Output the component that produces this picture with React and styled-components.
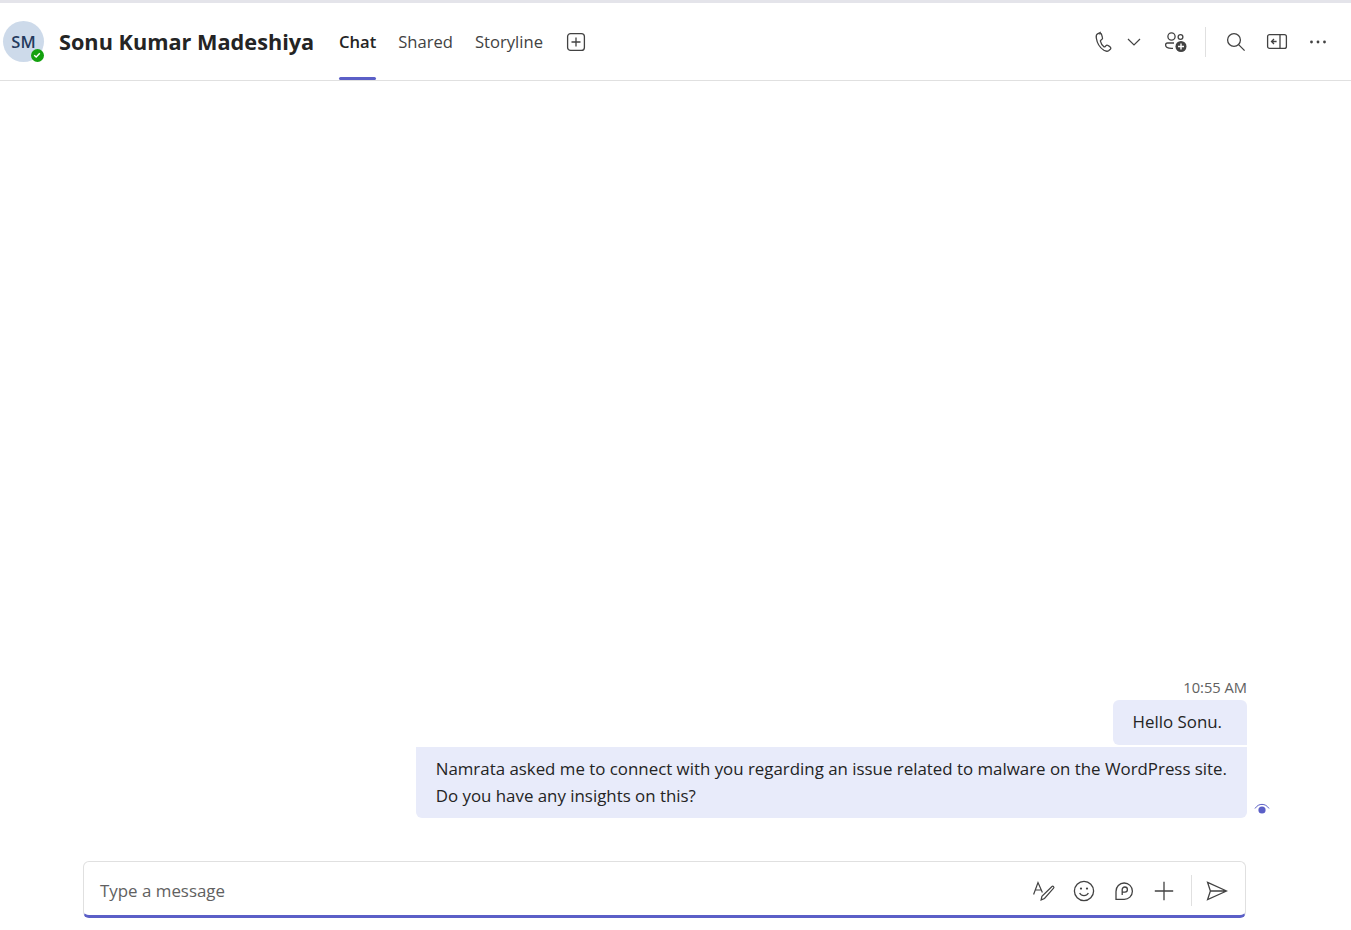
import React from "react";
import styled, { createGlobalStyle } from "styled-components";

const GlobalStyle = createGlobalStyle`
  html, body {
    margin: 0;
    padding: 0;
    background: #ffffff;
  }
  body {
    font-family: "Open Sans", "Noto Sans", "Liberation Sans", sans-serif;
    color: #242424;
  }
`;

const Page = styled.div`
  width: 1351px;
  height: 930px;
  display: flex;
  flex-direction: column;
  overflow: hidden;
  border-top: 3px solid #e4e4ea;
  box-sizing: border-box;
`;

const Header = styled.header`
  height: 77px;
  flex: none;
  display: flex;
  align-items: center;
  border-bottom: 1px solid #e0e0e0;
  box-sizing: content-box;
  padding-left: 3px;
  padding-right: 21px;
`;

const Avatar = styled.div`
  position: relative;
  width: 41px;
  height: 41px;
  flex: none;
  border-radius: 50%;
  background: #cddaea;
  color: #243a5e;
  font-size: 16.5px;
  font-weight: 600;
  display: flex;
  align-items: center;
  justify-content: center;
`;

const Presence = styled.span`
  position: absolute;
  right: 0;
  bottom: 0;
  width: 13.5px;
  height: 13.5px;
  border-radius: 50%;
  background: #13a10e;
  display: flex;
  align-items: center;
  justify-content: center;
`;

const Name = styled.h1`
  margin: 0 0 0 15px;
  flex: none;
  width: 280px;
  font-size: 21.7px;
  font-weight: 700;
  color: #242424;
  white-space: nowrap;
`;

const Tabs = styled.nav`
  display: flex;
  align-items: stretch;
  align-self: stretch;
  gap: 22px;
`;

const Tab = styled.a`
  position: relative;
  display: flex;
  align-items: center;
  font-size: 16.6px;
  font-weight: ${(p) => (p.$active ? 600 : 400)};
  color: ${(p) => (p.$active ? "#242424" : "#424242")};
  &::after {
    content: "";
    display: ${(p) => (p.$active ? "block" : "none")};
    position: absolute;
    left: 0;
    right: 0;
    bottom: 0;
    height: 3px;
    border-radius: 2px;
    background: #5b5fc7;
  }
`;

const AddTab = styled.button`
  border: 0;
  background: none;
  padding: 0;
  margin: 1px 0 0 23px;
  display: flex;
  color: #424242;
`;

const Spacer = styled.div`
  flex: 1;
`;

const Actions = styled.div`
  display: flex;
  align-items: center;
`;

const IconButton = styled.button`
  width: ${(p) => p.$w || 24}px;
  height: 24px;
  border: 0;
  background: none;
  padding: 0;
  margin-left: ${(p) => p.$ml || 0}px;
  display: flex;
  align-items: center;
  justify-content: center;
  color: #424242;
`;

const Divider = styled.div`
  width: 1px;
  height: ${(p) => p.$h}px;
  margin: 0 ${(p) => p.$mr}px 0 ${(p) => p.$ml}px;
  background: #e0e0e0;
`;

const Thread = styled.main`
  flex: 1;
  display: flex;
  flex-direction: column;
  align-items: flex-end;
  justify-content: flex-end;
  padding-right: 104px;
`;

const Time = styled.div`
  font-size: 14.7px;
  line-height: 19px;
  color: #616161;
  margin-bottom: 3px;
`;

const Bubble = styled.div`
  position: relative;
  background: #e8ebfa;
  color: #242424;
  font-size: 16.88px;
  line-height: ${(p) => (p.$last ? 27 : 24)}px;
  padding: ${(p) => (p.$last ? "8px 20px 9px" : "10px 25px 11px 20px")};
  margin-bottom: ${(p) => (p.$last ? 0 : 2)}px;
  border-radius: ${(p) => (p.$last ? "0 0 6px 6px" : "6px 6px 0 6px")};
  white-space: nowrap;
`;

const Seen = styled.span`
  position: absolute;
  left: calc(100% + 7px);
  bottom: 3px;
  display: flex;
`;

const ComposerWrap = styled.div`
  flex: none;
  padding: 43px 105px 12px 83px;
`;

const Composer = styled.div`
  height: 57px;
  box-sizing: border-box;
  border: 1px solid #e0e0e0;
  border-bottom: 3px solid #5b5fc7;
  border-radius: 6px;
  display: flex;
  align-items: center;
  padding: 4px 16px 0 16px;
`;

const Placeholder = styled.span`
  flex: 1;
  font-size: 16.9px;
  color: #616161;
`;

const Tools = styled.div`
  display: flex;
  align-items: center;
  gap: 16px;
`;

export default function App() {
  return (
    <Page>
      <GlobalStyle />
      <Header>
        <Avatar>
          SM
          <Presence>
            <svg width="8" height="8" viewBox="0 0 8 8" fill="none">
              <path d="M1.2 4.2 3.2 6 6.8 2.2" stroke="#fff" strokeWidth="1.4" />
            </svg>
          </Presence>
        </Avatar>
        <Name>Sonu Kumar Madeshiya</Name>
        <Tabs>
          <Tab $active>Chat</Tab>
          <Tab>Shared</Tab>
          <Tab>Storyline</Tab>
        </Tabs>
        <AddTab>
          <svg width="20" height="20" viewBox="0 0 20 20" fill="none" stroke="currentColor" strokeWidth="1.3">
            <rect x="1.6" y="1.6" width="16.8" height="16.8" rx="3" />
            <path d="M10 5.5v9M5.5 10h9" />
          </svg>
        </AddTab>
        <Spacer />
        <Actions>
          <IconButton>
            <svg width="20" height="22" viewBox="0 0 20 22" fill="none" stroke="currentColor" strokeWidth="1.3">
              <path d="M6.2 1.6 3.6 2.8C2.4 3.5 2 5 2.3 7c.7 4.6 3.4 9.6 7.6 12.3 1.7 1 3.7 1.2 5 .2l1.4-1.2c.8-.8.6-1.8-.2-2.4l-2-1.4c-.8-.5-1.7-.4-2.3.3l-.8.9c-.3.3-.7.3-1.1.1-1.7-1.3-2.9-3.2-3.5-5.6-.1-.4 0-.7.4-1l1-.7c.7-.5.9-1.3.6-2.1l-.8-2.8c-.3-.9-1-1.4-1.4-1z" />
            </svg>
          </IconButton>
          <IconButton $w={16} $ml={10}>
            <svg width="14" height="8" viewBox="0 0 14 8" fill="none" stroke="currentColor" strokeWidth="1.2">
              <path d="M1 1l6 6 6-6" />
            </svg>
          </IconButton>
          <IconButton $ml={22}>
            <svg width="24" height="22" viewBox="0 0 24 22" fill="none" stroke="currentColor" strokeWidth="1.3">
              <circle cx="7.5" cy="5.5" r="3.6" />
              <circle cx="16.5" cy="6" r="2.4" />
              <path d="M10 12H3.6C2.4 12 1.6 12.8 1.6 14c0 2 2 3.4 6 3.4h1.4" />
              <circle cx="17" cy="15.5" r="5.5" fill="#424242" stroke="none" />
              <path d="M17 12.5v6M14 15.5h6" stroke="#fff" strokeWidth="1.4" />
            </svg>
          </IconButton>
          <Divider $h={30} $ml={17} $mr={18} />
          <IconButton>
            <svg width="20" height="20" viewBox="0 0 20 20" fill="none" stroke="currentColor" strokeWidth="1.3">
              <circle cx="8" cy="8" r="6.4" />
              <path d="M12.6 12.6 18.6 18.6" />
            </svg>
          </IconButton>
          <IconButton $ml={17}>
            <svg width="22" height="17" viewBox="0 0 22 17" fill="none" stroke="currentColor" strokeWidth="1.3">
              <rect x="1.6" y="1.6" width="18.8" height="13.8" rx="2" />
              <path d="M14 1.6v13.8M10.6 8.5H5.6M8 6 5.5 8.5 8 11" />
            </svg>
          </IconButton>
          <IconButton $ml={17}>
            <svg width="18" height="4" viewBox="0 0 18 4" fill="currentColor">
              <circle cx="2.5" cy="2" r="1.4" />
              <circle cx="9" cy="2" r="1.4" />
              <circle cx="15.5" cy="2" r="1.4" />
            </svg>
          </IconButton>
        </Actions>
      </Header>
      <Thread>
        <Time>10:55 AM</Time>
        <Bubble>Hello Sonu.</Bubble>
        <Bubble $last>
          Namrata asked me to connect with you regarding an issue related to malware on the WordPress site.
          <br />
          Do you have any insights on this?
          <Seen>
            <svg width="16" height="12" viewBox="0 0 16 12" fill="none">
              <path d="M1 5.5C3 2.5 5.4 1.4 8 1.4s5 1.1 7 4.1" stroke="#5b5fc7" strokeWidth="1" />
              <circle cx="8" cy="7" r="3.6" fill="#5b5fc7" />
            </svg>
          </Seen>
        </Bubble>
      </Thread>
      <ComposerWrap>
        <Composer>
          <Placeholder>Type a message</Placeholder>
          <Tools>
            <IconButton>
              <svg width="24" height="24" viewBox="0 0 24 24" fill="none" stroke="currentColor" strokeWidth="1.2">
                <path d="M1.6 15.5 6 3.5l4.4 10M3.4 11H8.8" />
                <path d="M20 7.5c1-1 2.6.6 1.6 1.6L12.5 19.5l-3.4 1.4.8-3.6z" />
              </svg>
            </IconButton>
            <IconButton>
              <svg width="22" height="22" viewBox="0 0 22 22" fill="none" stroke="currentColor" strokeWidth="1.3">
                <circle cx="11" cy="11" r="9.6" />
                <path d="M6.6 13c1 1.8 2.6 2.7 4.4 2.7s3.4-.9 4.4-2.7" />
                <circle cx="8" cy="8.6" r="1.1" fill="currentColor" stroke="none" />
                <circle cx="14" cy="8.6" r="1.1" fill="currentColor" stroke="none" />
              </svg>
            </IconButton>
            <IconButton>
              <svg width="20" height="20" viewBox="0 0 20 20" fill="none" stroke="currentColor" strokeWidth="1.3">
                <path d="M2 18.4h8a8.2 8.2 0 1 0-8-8z" />
                <path d="M8.2 14V8.6a2.6 2.6 0 1 1 2.6 2.6H8.2" />
              </svg>
            </IconButton>
            <IconButton>
              <svg width="20" height="20" viewBox="0 0 20 20" fill="none" stroke="currentColor" strokeWidth="1.3">
                <path d="M10 .8v18.4M.8 10h18.4" />
              </svg>
            </IconButton>
            <Divider $h={31} $ml={-1} $mr={-3} />
            <IconButton>
              <svg width="22" height="20" viewBox="0 0 22 20" fill="none" stroke="currentColor" strokeWidth="1.3">
                <path d="M1.6 1.4 20.6 10 1.6 18.6 4.4 10zM4.4 10h16.2" />
              </svg>
            </IconButton>
          </Tools>
        </Composer>
      </ComposerWrap>
    </Page>
  );
}
